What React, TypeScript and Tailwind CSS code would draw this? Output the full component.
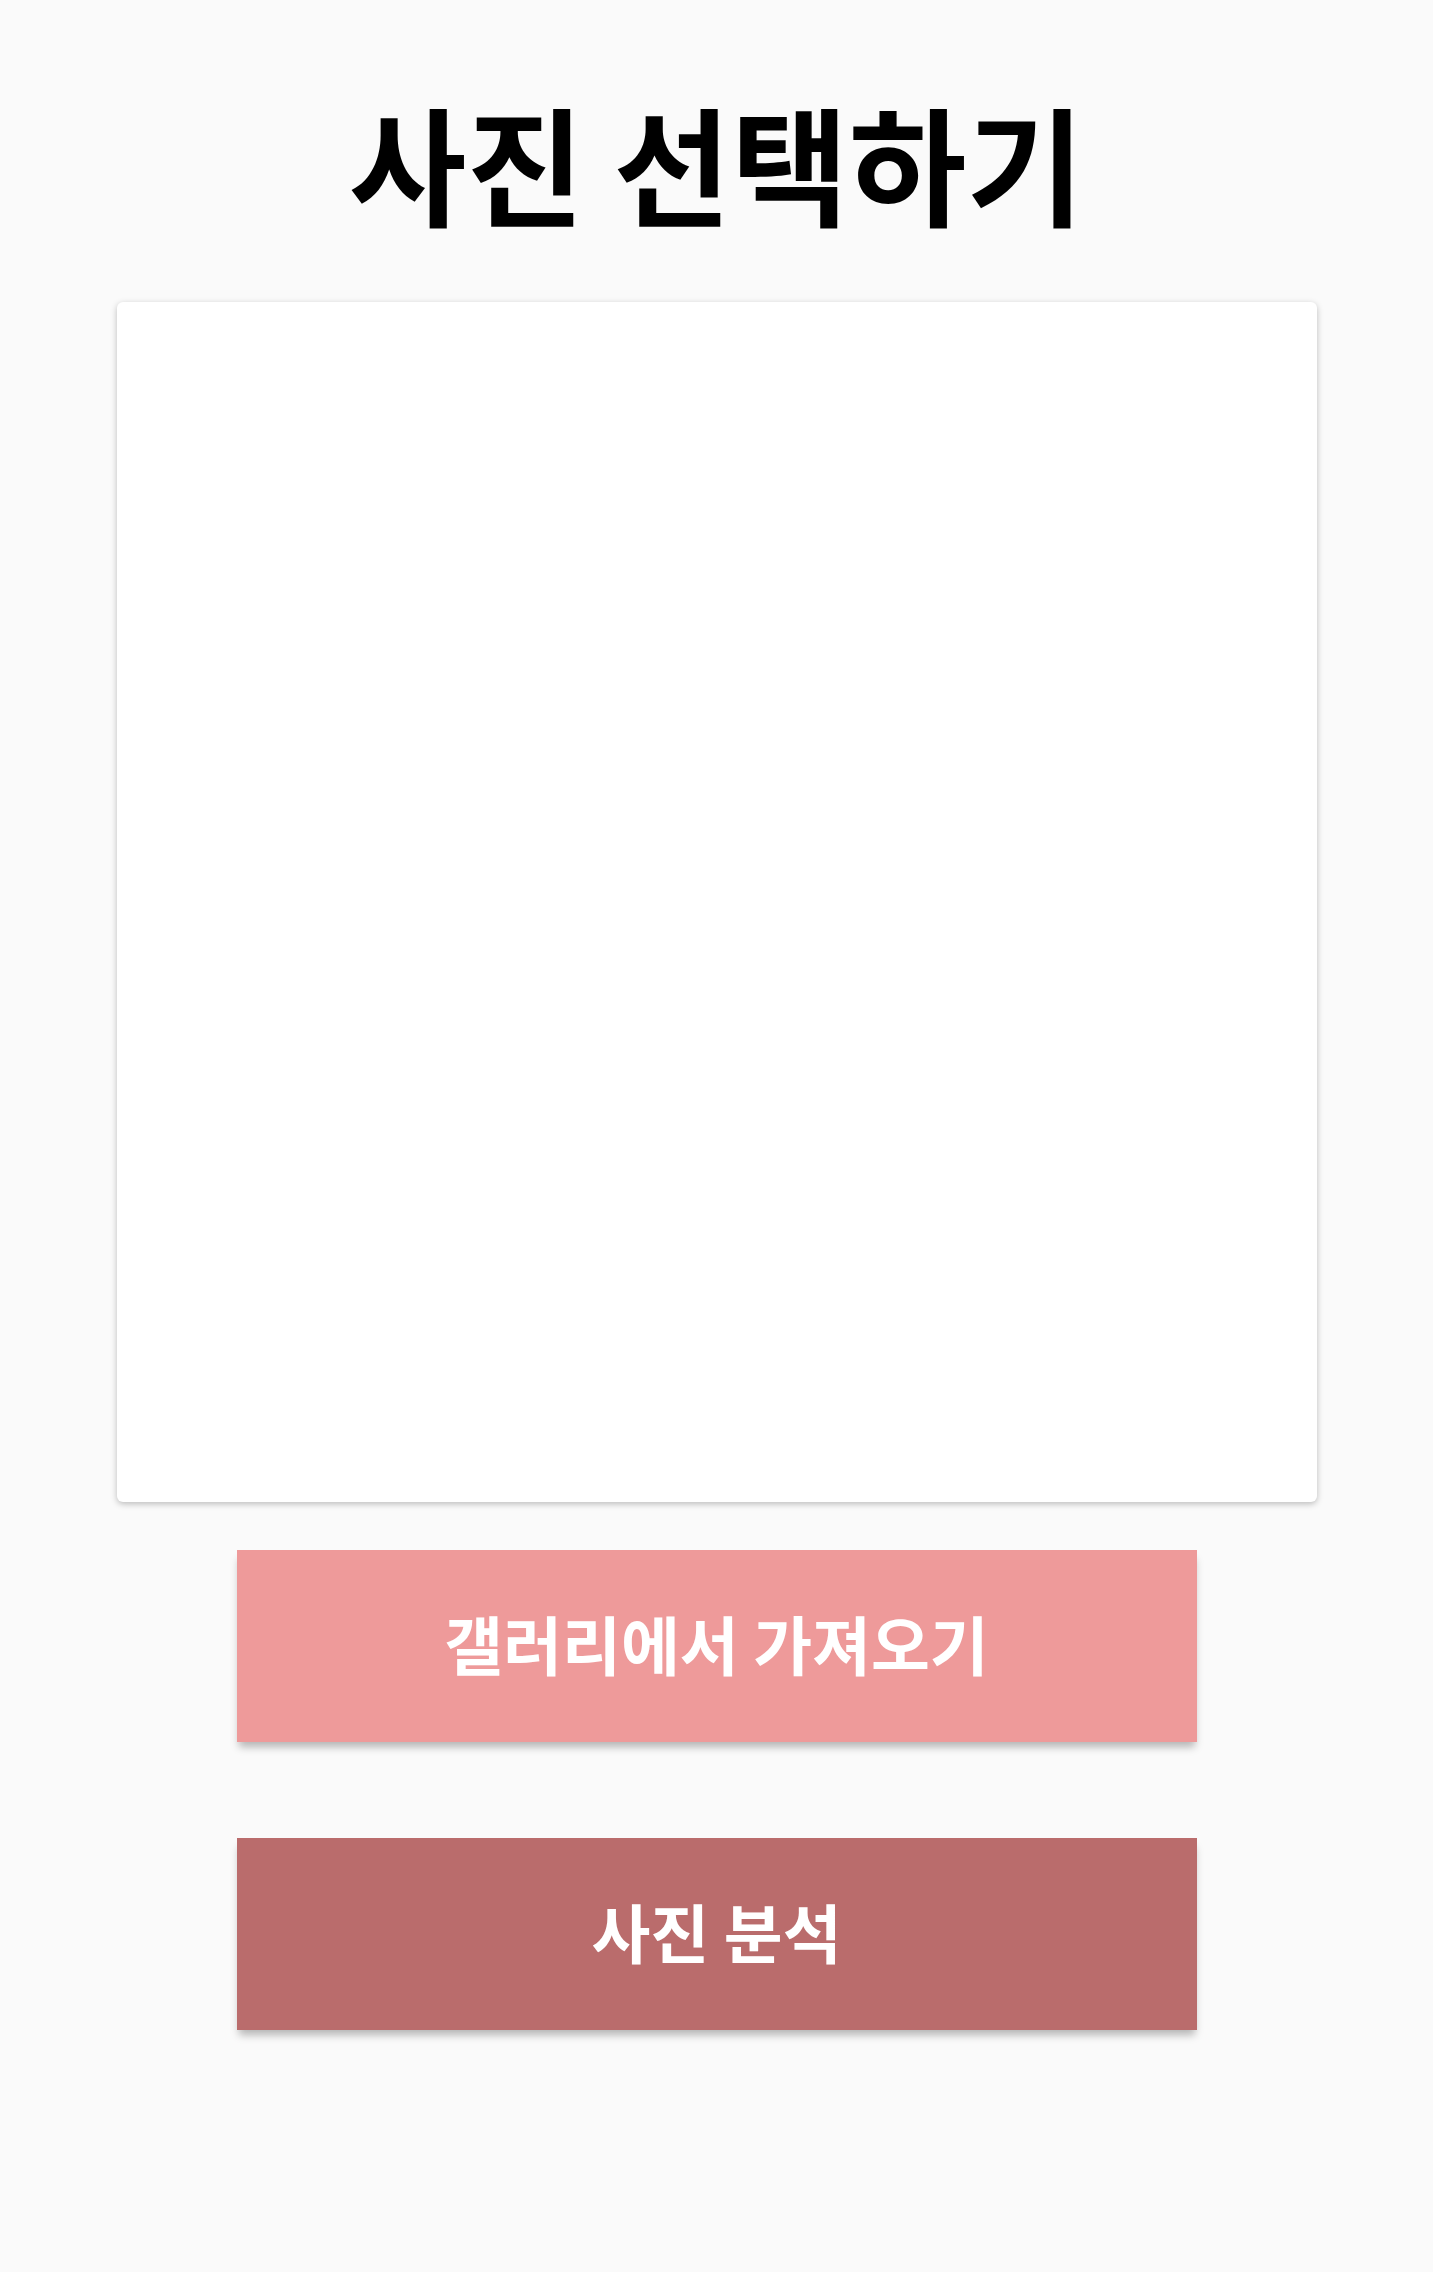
import React from 'react';

const font = { fontFamily: '"Noto Sans CJK KR", "Noto Sans", sans-serif' };

export default function App() {
  return (
    <main
      className="min-h-[2272px] w-full bg-[#fafafa] flex flex-col items-center"
      style={font}
    >
      <h1 className="mt-[82px] h-[160px] flex items-center justify-center text-[128px] leading-none font-bold text-black">
        사진 선택하기
      </h1>
      <div className="mt-[60px] w-[1200px] h-[1200px] bg-white rounded-[6px] shadow-[0_2px_6px_rgba(0,0,0,0.25)]" />
      <button className="mt-[48px] w-[960px] h-[192px] flex items-center justify-center pb-[8px] bg-[#ee9a9a] text-white text-[64px] leading-none font-bold shadow-[0_7px_8px_-2px_rgba(0,0,0,0.28)]">
        갤러리에서 가져오기
      </button>
      <button className="mt-[96px] w-[960px] h-[192px] flex items-center justify-center pb-[8px] bg-[#ba6c6c] text-white text-[64px] leading-none font-bold shadow-[0_7px_8px_-2px_rgba(0,0,0,0.28)]">
        사진 분석
      </button>
    </main>
  );
}
